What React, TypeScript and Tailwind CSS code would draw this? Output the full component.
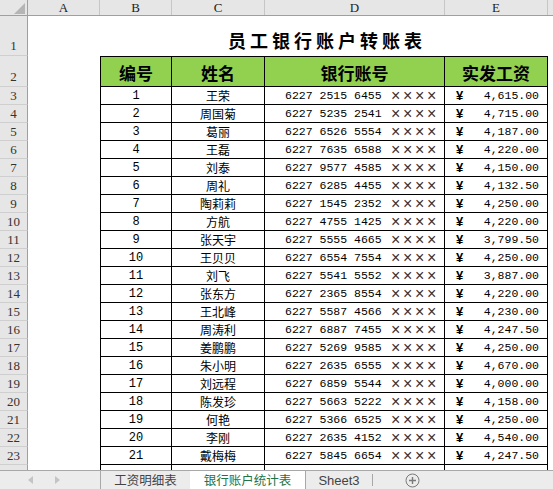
import React from "react";

type Row = { no: number; name: string; acct: string; pay: string };

const rows: Row[] = [
  { no: 1, name: "王荣", acct: "6227 2515 6455", pay: "4,615.00" },
  { no: 2, name: "周国菊", acct: "6227 5235 2541", pay: "4,715.00" },
  { no: 3, name: "葛丽", acct: "6227 6526 5554", pay: "4,187.00" },
  { no: 4, name: "王磊", acct: "6227 7635 6588", pay: "4,220.00" },
  { no: 5, name: "刘泰", acct: "6227 9577 4585", pay: "4,150.00" },
  { no: 6, name: "周礼", acct: "6227 6285 4455", pay: "4,132.50" },
  { no: 7, name: "陶莉莉", acct: "6227 1545 2352", pay: "4,250.00" },
  { no: 8, name: "方航", acct: "6227 4755 1425", pay: "4,220.00" },
  { no: 9, name: "张天宇", acct: "6227 5555 4665", pay: "3,799.50" },
  { no: 10, name: "王贝贝", acct: "6227 6554 7554", pay: "4,250.00" },
  { no: 11, name: "刘飞", acct: "6227 5541 5552", pay: "3,887.00" },
  { no: 12, name: "张东方", acct: "6227 2365 8554", pay: "4,220.00" },
  { no: 13, name: "王北峰", acct: "6227 5587 4566", pay: "4,230.00" },
  { no: 14, name: "周涛利", acct: "6227 6887 7455", pay: "4,247.50" },
  { no: 15, name: "姜鹏鹏", acct: "6227 5269 9585", pay: "4,250.00" },
  { no: 16, name: "朱小明", acct: "6227 2635 6555", pay: "4,670.00" },
  { no: 17, name: "刘远程", acct: "6227 6859 5544", pay: "4,000.00" },
  { no: 18, name: "陈发珍", acct: "6227 5663 5222", pay: "4,158.00" },
  { no: 19, name: "何艳", acct: "6227 5366 6525", pay: "4,250.00" },
  { no: 20, name: "李刚", acct: "6227 2635 4152", pay: "4,540.00" },
  { no: 21, name: "戴梅梅", acct: "6227 5845 6654", pay: "4,247.50" },
];

function RowHead({ n, className = "" }: { n?: number; className?: string }) {
  return (
    <div
      className={`w-[28px] shrink-0 bg-[#e6e6e6] border-r border-r-[#9f9f9f] border-b border-b-[#cfcfcf] flex justify-center text-[13px] text-[#333] font-['Liberation_Serif',serif] leading-none ${className}`}
    >
      {n}
    </div>
  );
}

function ColHead({ label, w }: { label: string; w: string }) {
  return (
    <div
      className={`${w} shrink-0 border-r border-[#c6c6c6] flex items-center justify-center text-[13px] text-[#222] font-['Liberation_Serif',serif]`}
    >
      {label}
    </div>
  );
}

function Crosses() {
  return (
    <span className="flex ml-[8px] text-[16px] leading-none text-[#333] font-['Liberation_Sans',sans-serif]">
      {[0, 1, 2, 3].map((i) => (
        <span key={i} className="w-[12px] text-center">×</span>
      ))}
    </span>
  );
}

function DataRow({ r, row }: { r: Row; row: number }) {
  return (
    <div className="flex h-[18px] shrink-0">
      <RowHead n={row} className="items-center" />
      <div className="w-[72px] shrink-0" />
      <div className="w-[72px] shrink-0 border-x border-b border-black flex items-center justify-center text-[12px] font-['Liberation_Mono',monospace] text-black">
        {r.no}
      </div>
      <div className="w-[93px] shrink-0 border-r border-b border-black flex items-center justify-center text-[12px] font-['Noto_Sans_CJK_SC',sans-serif] text-black">
        {r.name}
      </div>
      <div className="w-[180px] shrink-0 border-r border-b border-black flex items-center pl-[20px] text-[11.5px] font-['Liberation_Mono',monospace] text-black whitespace-pre">
        {r.acct}
        <Crosses />
      </div>
      <div className="w-[103px] shrink-0 border-r border-b border-black flex items-center justify-between pl-[11px] pr-[8px] text-[11.5px] font-['Liberation_Mono',monospace] text-black">
        <span className="font-bold text-[13px] font-['Liberation_Sans',sans-serif]">¥</span>
        <span>{r.pay}</span>
      </div>
    </div>
  );
}

export default function App() {
  return (
    <div className="w-[553px] h-[489px] overflow-hidden bg-white flex flex-col">
      {/* column headers */}
      <div className="flex h-[16px] shrink-0 bg-[#e6e6e6] border-b border-[#9f9f9f]">
        <div className="w-[28px] shrink-0 border-r border-[#9f9f9f] flex items-end justify-end pr-[2px] pb-[1px]">
          <svg width="11" height="11" viewBox="0 0 11 11">
            <polygon points="11,0 11,11 0,11" fill="#b5b5b5" />
          </svg>
        </div>
        <ColHead label="A" w="w-[72px]" />
        <ColHead label="B" w="w-[72px]" />
        <ColHead label="C" w="w-[93px]" />
        <ColHead label="D" w="w-[180px]" />
        <ColHead label="E" w="w-[103px]" />
        <div className="flex-1" />
      </div>

      {/* sheet body */}
      <div className="flex-1 flex flex-col overflow-hidden">
        <div className="flex h-[40px] shrink-0">
          <RowHead n={1} className="items-end pb-[3px]" />
          <div className="w-[72px] shrink-0" />
          <div className="w-[448px] shrink-0 flex items-end justify-center pb-[7px] pl-[6px] text-[18px] font-bold tracking-[4px] font-['Noto_Sans_CJK_SC',sans-serif] text-black leading-none">
            员工银行账户转账表
          </div>
        </div>

        <div className="flex h-[31px] shrink-0">
          <RowHead n={2} className="items-end pb-[3px]" />
          <div className="w-[72px] shrink-0" />
          {[
            ["编号", "w-[72px] border-l"],
            ["姓名", "w-[93px]"],
            ["银行账号", "w-[180px]"],
            ["实发工资", "w-[103px]"],
          ].map(([t, c]) => (
            <div
              key={t}
              className={`${c} shrink-0 bg-[#92d050] border-y border-r border-black flex items-center justify-center pt-[2px] text-[17px] font-bold font-['Noto_Sans_CJK_SC',sans-serif] text-black leading-none`}
            >
              {t}
            </div>
          ))}
        </div>

        {rows.map((r, i) => (
          <DataRow key={r.no} r={r} row={i + 3} />
        ))}

        <div className="flex h-[18px] shrink-0">
          <RowHead />
          <div className="w-[72px] shrink-0" />
          <div className="w-[72px] shrink-0 border-x border-black" />
          <div className="w-[93px] shrink-0 border-r border-black" />
          <div className="w-[180px] shrink-0 border-r border-black" />
          <div className="w-[103px] shrink-0 border-r border-black" />
        </div>
      </div>

      {/* sheet tabs */}
      <div className="h-[19px] shrink-0 flex bg-[#ececec] border-t border-[#a8a8a8] text-[12.5px] font-['Noto_Sans_CJK_SC',sans-serif] leading-none">
        <div className="w-[100px] shrink-0 flex items-center pl-[28px] gap-[22px]">
          <svg width="5" height="8" viewBox="0 0 5 8">
            <polygon points="5,0 5,8 0,4" fill="#c4c4c4" />
          </svg>
          <svg width="5" height="8" viewBox="0 0 5 8">
            <polygon points="0,0 0,8 5,4" fill="#c4c4c4" />
          </svg>
        </div>
        <div className="w-[90px] shrink-0 border-l border-[#a8a8a8] flex items-center justify-center text-[#444]">
          工资明细表
        </div>
        <div className="w-[115px] shrink-0 bg-white flex items-center justify-center text-[#217346]">
          银行账户统计表
        </div>
        <div className="w-[67px] shrink-0 border-l border-[#a8a8a8] flex items-center justify-center text-[#444] font-['Liberation_Sans',sans-serif] text-[13px]">
          Sheet3
        </div>
        <div className="w-[1px] bg-[#a8a8a8] my-[3px]" />
        <div className="flex-1 flex items-center pl-[32px]">
          <svg width="15" height="15" viewBox="0 0 15 15">
            <circle cx="7.5" cy="7.5" r="6.5" fill="none" stroke="#7a7a7a" strokeWidth="1" />
            <path d="M7.5 4v7M4 7.5h7" stroke="#7a7a7a" strokeWidth="1.4" />
          </svg>
        </div>
      </div>
    </div>
  );
}
